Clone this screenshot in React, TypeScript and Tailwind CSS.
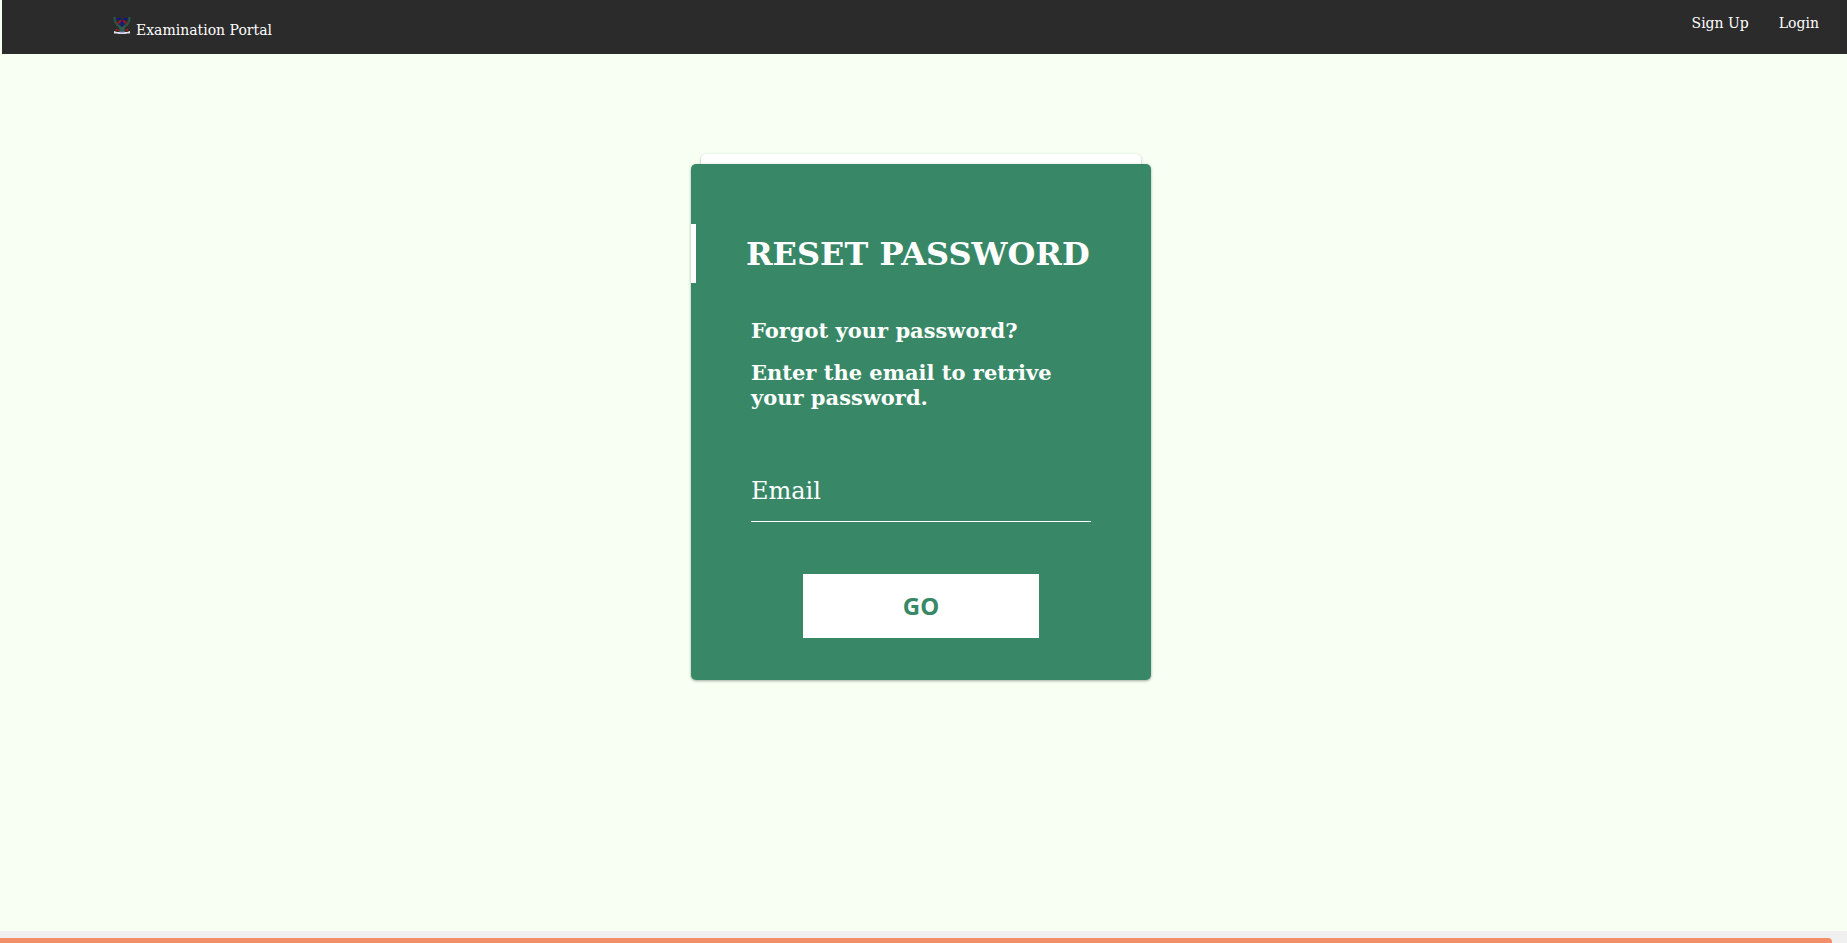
function Crest() {
  return (
    <svg className="h-5 w-[18px]" viewBox="0 0 18 20" aria-hidden="true">
      <path d="M1.500 2Q1.500 9 6 11L8 14H10L12 11Q16.500 9 16.500 2" fill="none" stroke="#2c5248" strokeWidth="2.200" />
      <path d="M5 10L7 11.500H11L13 10L11.500 14L12 17H6L6.500 14Z" fill="#2f5a4d" />
      <path d="M3.500 4H7.500M14.500 4H10.500" stroke="#15158a" strokeWidth="1.800" />
      <path d="M9 5.500V11.500M7.500 8.500H10.500" stroke="#1414a0" strokeWidth="1.800" />
      <path d="M8 5.500L4.500 8.500M10 5.500L13.500 8.500M3 14L5.500 16M15 14L12.500 16" stroke="#b81414" strokeWidth="1.600" />
      <path d="M1 16L4 17H14L17 16V18.500H14L12 19H6L4 18.500H1Z" fill="#e4e4ea" />
      <path d="M6.500 17.500H11.500" stroke="#a9a9e6" strokeWidth="1.500" />
    </svg>
  );
}

export default function App() {
  return (
    <div className="flex min-h-screen flex-col bg-[#f8fff3] font-['DejaVu_Serif',serif]">
      <header className="ml-0.5 flex h-[54px] items-start justify-between bg-[#2b2b2b] pr-7 pl-[111px] text-sm text-white">
        <a href="#" className="flex items-start gap-[5px] pt-[15px]">
          <Crest />
          <span className="pt-[5px] leading-5">Examination Portal</span>
        </a>
        <nav className="flex gap-[30px] pt-[13px] leading-5">
          <a href="#signup">Sign Up</a>
          <a href="#login">Login</a>
        </nav>
      </header>

      <main className="flex flex-1 flex-col items-center pt-[100px] pr-[5px]">
        <div className="h-2.5 w-[440px] rounded-t-[5px] bg-white shadow-[0_1px_3px_rgba(0,0,0,0.3)]" />
        <section className="relative w-[460px] rounded-[5px] bg-[#388867] pt-[60px] pb-[42px] text-white shadow-[0_1px_3px_rgba(0,0,0,0.35)]">
          <h1 className="border-l-[5px] border-white pt-0.5 pl-[50px] text-[32px] leading-[57px] font-bold whitespace-nowrap">
            RESET PASSWORD
          </h1>
          <form className="px-[60px]" onSubmit={(event) => event.preventDefault()}>
            <div className="mt-[35px] flex flex-col gap-[17px] text-[21px] leading-[25px] font-bold">
              <p>Forgot your password?</p>
              <p>Enter the email to retrive your password.</p>
            </div>
            <input
              type="email"
              aria-label="Email"
              placeholder="Email"
              className="mt-[51px] block h-[61px] w-full border-b border-white bg-transparent text-2xl text-white outline-none placeholder:text-white placeholder:opacity-100"
            />
            <button
              type="submit"
              className="mx-auto mt-[52px] block h-16 w-[236px] bg-white font-['Noto_Sans',sans-serif] text-2xl font-bold text-[#388867]"
            >
              GO
            </button>
          </form>
        </section>
      </main>

      <footer className="bg-[#f0f0f0] pt-[7px] pr-[15px]">
        <div className="h-[5px] rounded-tr-sm bg-[#f28f68]" />
      </footer>
    </div>
  );
}
